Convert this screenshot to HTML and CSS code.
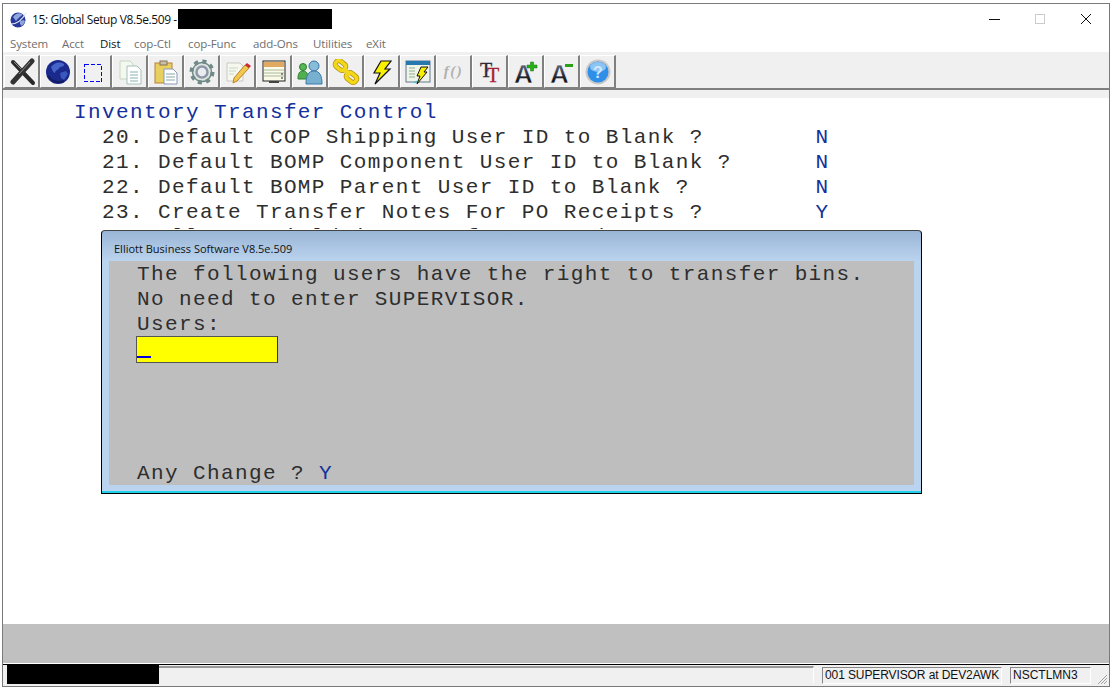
FILE: index.html
```html
<!DOCTYPE html>
<html lang="en">
<head>
<meta charset="utf-8">
<title>Global Setup</title>
<link rel="stylesheet" href="styles.css">
</head>
<body>
<div class="window">
  <header class="titlebar">
    <svg class="app-icon" width="17" height="17" viewBox="0 0 17 17"><circle cx="8" cy="9" r="7.500" fill="#27399a"/><path d="M3 6c2-3 6-5 9-3 1 2-2 2-3 4-2 1-2 2-3 3-1-1-2-3-3-4zM10 10l4-1 1 2-3 4-2-2z" fill="#8fa6dc"/><path d="M1 13c5 0 11-4 15-11" fill="none" stroke="#dfe5f5" stroke-width="1.200"/></svg>
    <span class="title-text">15: Global Setup V8.5e.509 -</span>
    <span class="redact redact-title"></span>
    <div class="win-controls">
      <span class="win-min"></span>
      <span class="win-max"></span>
      <svg class="win-close" width="12" height="12" viewBox="0 0 12 12"><path d="M1 1l10 10M11 1L1 11" stroke="#111" stroke-width="1" fill="none"/></svg>
    </div>
  </header>
  <nav class="menubar">
    <span class="m m-system">System</span><span class="m m-acct">Acct</span><span class="m m-dist">Dist</span><span class="m m-ctl">cop-Ctl</span><span class="m m-func">cop-Func</span><span class="m m-add">add-Ons</span><span class="m m-util">Utilities</span><span class="m m-exit">eXit</span>
  </nav>
  <div class="toolbar">
    <button class="tb"><svg width="28" height="28" viewBox="0 0 28 28"><path d="M5 4l20 21" stroke="#2a2a2a" stroke-width="4" stroke-linecap="round"/><path d="M24 3L5 24" stroke="#333" stroke-width="5" stroke-linecap="round"/><path d="M6 4l7 7M22 4L11 16" stroke="#8a8a8a" stroke-width="1"/></svg></button>
    <button class="tb"><svg width="26" height="26" viewBox="0 0 26 26"><circle cx="13" cy="13" r="12" fill="#1a2a8c"/><path d="M6 8c3-4 8-6 13-3 1 2-2 3-4 3-1 3-5 3-5 6-2 0-3-4-4-6z" fill="#4564c8"/><path d="M15 14l6-2 2 3-4 6-3-2z" fill="#3a57bc"/><path d="M3 17c3 5 10 8 16 5" stroke="#121c60" stroke-width="2" fill="none"/></svg></button>
    <button class="tb"><svg width="21" height="21" viewBox="0 0 21 21" shape-rendering="crispEdges"><rect x="1.500" y="3.500" width="17" height="17" fill="none" stroke="#0000ff" stroke-width="1" stroke-dasharray="4 2"/></svg></button>
    <button class="tb"><svg width="26" height="26" viewBox="0 0 26 26"><path d="M3 2h10l3 3v15H3z" fill="#f4f8ef" stroke="#c6d6c4"/><path d="M10 7h10l4 4v14H10z" fill="#fff" stroke="#a8c0bc"/><path d="M13 13h8M13 16h8M13 19h8M13 22h8" stroke="#88b0b0"/></svg></button>
    <button class="tb"><svg width="26" height="26" viewBox="0 0 26 26"><rect x="2" y="4" width="17" height="20" fill="#e8d060" stroke="#b8803c"/><rect x="7" y="2" width="7" height="4" fill="#c8c0a8" stroke="#887050"/><path d="M11 10h9l4 4v11H11z" fill="#fff" stroke="#8898b8"/><path d="M13 15h9M13 18h9M13 21h9" stroke="#88a8a8"/></svg></button>
    <button class="tb"><svg width="28" height="28" viewBox="0 0 28 28"><circle cx="14" cy="14" r="9.500" fill="#dfe6e0" stroke="#6f8a88" stroke-width="1.500"/><circle cx="14" cy="14" r="10.500" fill="none" stroke="#6f8a88" stroke-width="4" stroke-dasharray="4 4.250"/><circle cx="14" cy="14" r="5.500" fill="#e8ecee" stroke="#8e96a8" stroke-width="2.500"/></svg></button>
    <button class="tb"><svg width="26" height="26" viewBox="0 0 26 26"><path d="M2 4h13l3 3v15H2z" fill="#f6f8f0" stroke="#c8c8c0"/><path d="M4 9h9M4 12h7M4 15h5" stroke="#c8d4c4"/><path d="M9 19L20 6l4 3-12 13-4 2z" fill="#f0c850" stroke="#c08028"/><path d="M20 6l2-2 4 3-2 2z" fill="#c82838"/></svg></button>
    <button class="tb"><svg width="26" height="26" viewBox="0 0 26 26"><rect x="2" y="2" width="22" height="20" fill="#fbfbe8" stroke="#222"/><rect x="3" y="3" width="20" height="5" fill="#e0a860"/><path d="M3 11h20M3 14h20M3 17h20" stroke="#a8b8a0"/><rect x="8" y="22" width="10" height="2" fill="#444"/><circle cx="21" cy="15" r="1" fill="#666"/><circle cx="21" cy="19" r="1" fill="#666"/></svg></button>
    <button class="tb"><svg width="26" height="26" viewBox="0 0 26 26"><circle cx="6" cy="8" r="3.500" fill="#58b858" stroke="#2a8030"/><path d="M1 20c0-5 1-8 5-8s5 3 5 8z" fill="#50b050" stroke="#2a8030"/><circle cx="17" cy="7" r="5" fill="#88bcd8" stroke="#3878a8"/><path d="M9 25c0-8 2-13 8-13s8 5 8 13z" fill="#78b0d0" stroke="#3878a8"/></svg></button>
    <button class="tb"><svg width="28" height="26" viewBox="0 0 28 26"><g fill="none"><rect x="3" y="3" width="11" height="7" rx="3" transform="rotate(38 8.500 6.500)" stroke="#b89010" stroke-width="5"/><rect x="14" y="15" width="11" height="7" rx="3" transform="rotate(38 19.500 18.500)" stroke="#b89010" stroke-width="5"/><rect x="3" y="3" width="11" height="7" rx="3" transform="rotate(38 8.500 6.500)" stroke="#f2d818" stroke-width="3.500"/><rect x="14" y="15" width="11" height="7" rx="3" transform="rotate(38 19.500 18.500)" stroke="#f2d818" stroke-width="3.500"/><path d="M11 9l7 7" stroke="#f2d818" stroke-width="4"/></g></svg></button>
    <button class="tb"><svg width="22" height="26" viewBox="0 0 22 26"><path d="M10 2h10L14 10h5L4 25l5-11H3z" fill="#f8f000" stroke="#111" stroke-width="1.200"/></svg></button>
    <button class="tb"><svg width="26" height="26" viewBox="0 0 26 26"><rect x="1" y="2" width="24" height="21" fill="#f0f4e8" stroke="#607890"/><rect x="1" y="2" width="24" height="4" fill="#2878b0"/><path d="M4 9h6M4 12h6M4 15h6M4 18h6" stroke="#90b090"/><path d="M16 8h7l-4 5h3L12 25l3-8h-3z" fill="#f8f000" stroke="#111"/><path d="M9 24l3-2" stroke="#20c0e0"/></svg></button>
    <button class="tb tb-fx"><span class="fx">f()</span></button>
    <button class="tb"><svg width="27" height="27" viewBox="0 0 27 27"><text class="tt tt-dark" x="4" y="19">T</text><text class="tt tt-red" x="11" y="24">T</text></svg></button>
    <button class="tb"><svg width="29" height="29" viewBox="0 0 29 29"><defs><linearGradient id="ag" x1="0" y1="0" x2="0" y2="1"><stop offset="0.200" stop-color="#5a6478"/><stop offset="0.700" stop-color="#14161c"/></linearGradient></defs><text class="big-a" x="3" y="26" fill="url(#ag)">A</text><path d="M16 8h3.500V5h3v3h3.500v3h-3.500v3h-3v-3H16z" fill="#28b018" stroke="#1a7010" stroke-width=".5"/></svg></button>
    <button class="tb"><svg width="29" height="29" viewBox="0 0 29 29"><text class="big-a" x="3" y="26" fill="url(#ag)">A</text><rect x="18" y="7" width="8" height="3" fill="#28a018"/></svg></button>
    <button class="tb"><svg width="26" height="26" viewBox="0 0 26 26"><circle cx="13" cy="13" r="12.500" fill="#c8c8c8"/><circle cx="13" cy="13" r="10.500" fill="#2f8fe8"/><ellipse cx="13" cy="8" rx="8" ry="5" fill="#8cc4f4"/><text class="q" x="13" y="19" text-anchor="middle">?</text></svg></button>
  </div>
  <div class="toolbar-gap"></div>
  <main class="screen">
<pre class="term term-main"><span class="blue">Inventory Transfer Control</span>
  20. Default COP Shipping User ID to Blank ?        <span class="blue">N</span>
  21. Default BOMP Component User ID to Blank ?      <span class="blue">N</span>
  22. Default BOMP Parent User ID to Blank ?         <span class="blue">N</span>
  23. Create Transfer Notes For PO Receipts ?        <span class="blue">Y</span>
  24. Allow Serial/Bin Transfer In Order Entry ?</pre>
    <section class="dialog">
      <div class="dialog-title">Elliott Business Software V8.5e.509</div>
      <div class="dialog-body">
<pre class="term dlg-text">The following users have the right to transfer bins.
No need to enter SUPERVISOR.
Users:</pre>
        <div class="field"><span class="cursor"></span></div>
<pre class="term dlg-text dlg-foot">Any Change ? <span class="blue">Y</span></pre>
      </div>
    </section>
  </main>
  <div class="bottom-band"></div>
  <footer class="statusbar">
    <span class="redact redact-status"></span>
    <span class="st-fill"></span>
    <span class="st-panel st-user">001 SUPERVISOR at DEV2AWK</span>
    <span class="st-panel st-prog">NSCTLMN3</span>
    <svg class="grip" width="12" height="12" viewBox="0 0 12 12"><path d="M11 2L2 11M11 5l-6 6M11 8l-3 3" stroke="#a0a0a0" fill="none"/></svg>
  </footer>
</div>
</body>
</html>
```
FILE: styles.css
```css
* { box-sizing: border-box; }
html, body { margin: 0; padding: 0; background: #fff; }
body { width: 1113px; height: 691px; padding: 3px 3px 4px 2px; overflow: hidden; }
.window {
  width: 100%; height: 100%;
  border: 1px solid #7a7a7a;
  display: flex; flex-direction: column;
  background: #fff;
  font-family: "Open Sans", "Liberation Sans", sans-serif;
}
.titlebar { height: 30px; display: flex; align-items: center; padding-left: 7px; position: relative; flex: none; }
.app-icon { margin-right: 5px; }
.title-text { font-size: 12px; color: #111; letter-spacing: -.4px; }
.redact { background: #000; display: block; }
.redact-title { width: 154px; height: 20px; margin-left: 1px; }
.win-controls { margin-left: auto; display: flex; align-items: center; gap: 0; }
.win-min { width: 11px; height: 1px; background: #111; margin-right: 35px; }
.win-max { width: 10px; height: 10px; border: 1px solid #ccc; margin-right: 35px; }
.win-close { margin-right: 17px; }
.menubar { height: 18px; display: flex; align-items: center; padding-left: 7px; flex: none; font-size: 11.500px; color: #6e6e6e; }
.m { display: block; letter-spacing: -.1px; }
.m-system { width: 52px; }
.m-acct { width: 38px; }
.m-dist { width: 34px; color: #111; }
.m-ctl { width: 54px; }
.m-func { width: 65px; }
.m-add { width: 60px; }
.m-util { width: 53px; }
.toolbar { height: 38px; background: #f0f0f0; flex: none; display: flex; padding: 3px 0 0 1px; gap: 0; border-bottom: 2px solid #808080; }
.tb {
  width: 36px; height: 33px; padding: 0;
  background: #f0f0f0;
  border: 0;
  border-left: 1px solid #fff; border-top: 1px solid #fff;
  border-right: 2px solid #808080; border-bottom: 1px solid #808080;
  display: flex; align-items: center; justify-content: center;
}
.fx { font-family: "Liberation Serif", serif; font-style: italic; font-weight: 700; font-size: 15px; color: #b0b0b0; letter-spacing: 1.500px; }
.q { font-family: "Liberation Sans", sans-serif; font-size: 16px; font-weight: 700; fill: #d0e8ff; }
.tt { font-family: "Liberation Serif", serif; font-size: 20px; stroke-width: .3px; }
.tt-dark { fill: #2a2a38; stroke: #2a2a38; }
.tt-red { fill: #a82030; stroke: #a82030; }
.big-a { font-family: "Liberation Sans", sans-serif; font-weight: 700; font-size: 26px; stroke: #fff; stroke-width: .5px; }
.toolbar-gap { height: 8px; background: #f0f0f0; flex: none; }
.screen { flex: 1; position: relative; min-height: 0; overflow: hidden; padding: 2px 0 0 71px; }
.term {
  margin: 0;
  font-family: "Liberation Mono", "Courier New", monospace;
  font-size: 21px;
  letter-spacing: 1.39px;
  line-height: 25px;
  color: #2e2e2e;
  white-space: pre;
}
.term-main { height: 129px; overflow: hidden; }
.blue { color: #14309c; }
.dialog {
  position: absolute; left: 98px; top: 132px;
  width: 821px; height: 264px;
  border: 1px solid #000; border-top-color: #444; border-radius: 4px 4px 0 0;
  background: linear-gradient(#9ab6d6, #bad3ee 30px);
  box-shadow: inset 0 -2px 0 #1fd0e8;
  padding: 0 7px 8px 7px;
  display: flex; flex-direction: column;
}
.dialog-title { height: 30px; padding: 8px 0 0 5px; font-size: 11px; line-height: 20px; color: #111; flex: none; }
.dialog-body { flex: 1; background: #bebebe; padding: 1px 0 0 27px; display: flex; flex-direction: column; }
.dlg-text { line-height: 25px; padding-left: 1px; }
.field { width: 142px; height: 27px; background: #ff0; border: 1px solid #555; border-right-color: #333; margin-top: -1px; position: relative; }
.cursor { position: absolute; left: 0; bottom: 4px; width: 14px; height: 2px; background: #0000e0; }
.dlg-foot { margin-top: auto; margin-bottom: -1px; }
.bottom-band { height: 40px; background: #c0c0c0; flex: none; border-bottom: 1px solid #fff; }
.statusbar { height: 22px; flex: none; background: #f0f0f0; border-top: 1px solid #000; display: flex; align-items: flex-start; padding-left: 4px; position: relative; font-family: "Liberation Sans", sans-serif; font-size: 12px; color: #111; }
.redact-status { width: 152px; height: 19px; flex: none; }
.st-fill { width: 655px; height: 17px; margin-top: 1px; border-top: 2px solid #999; border-right: 1px solid #fff; flex: none; margin-right: 8px; }
.st-panel { display: block; flex: none; height: 17px; margin-top: 2px; border: 1px solid #fff; border-top-color: #888; border-left-color: #888; line-height: 15px; padding-left: 2px; white-space: nowrap; overflow: hidden; }
.st-user { width: 180px; margin-right: 8px; letter-spacing: -.1px; }
.st-prog { width: 81px; }
.grip { position: absolute; right: 1px; bottom: 1px; }
```
